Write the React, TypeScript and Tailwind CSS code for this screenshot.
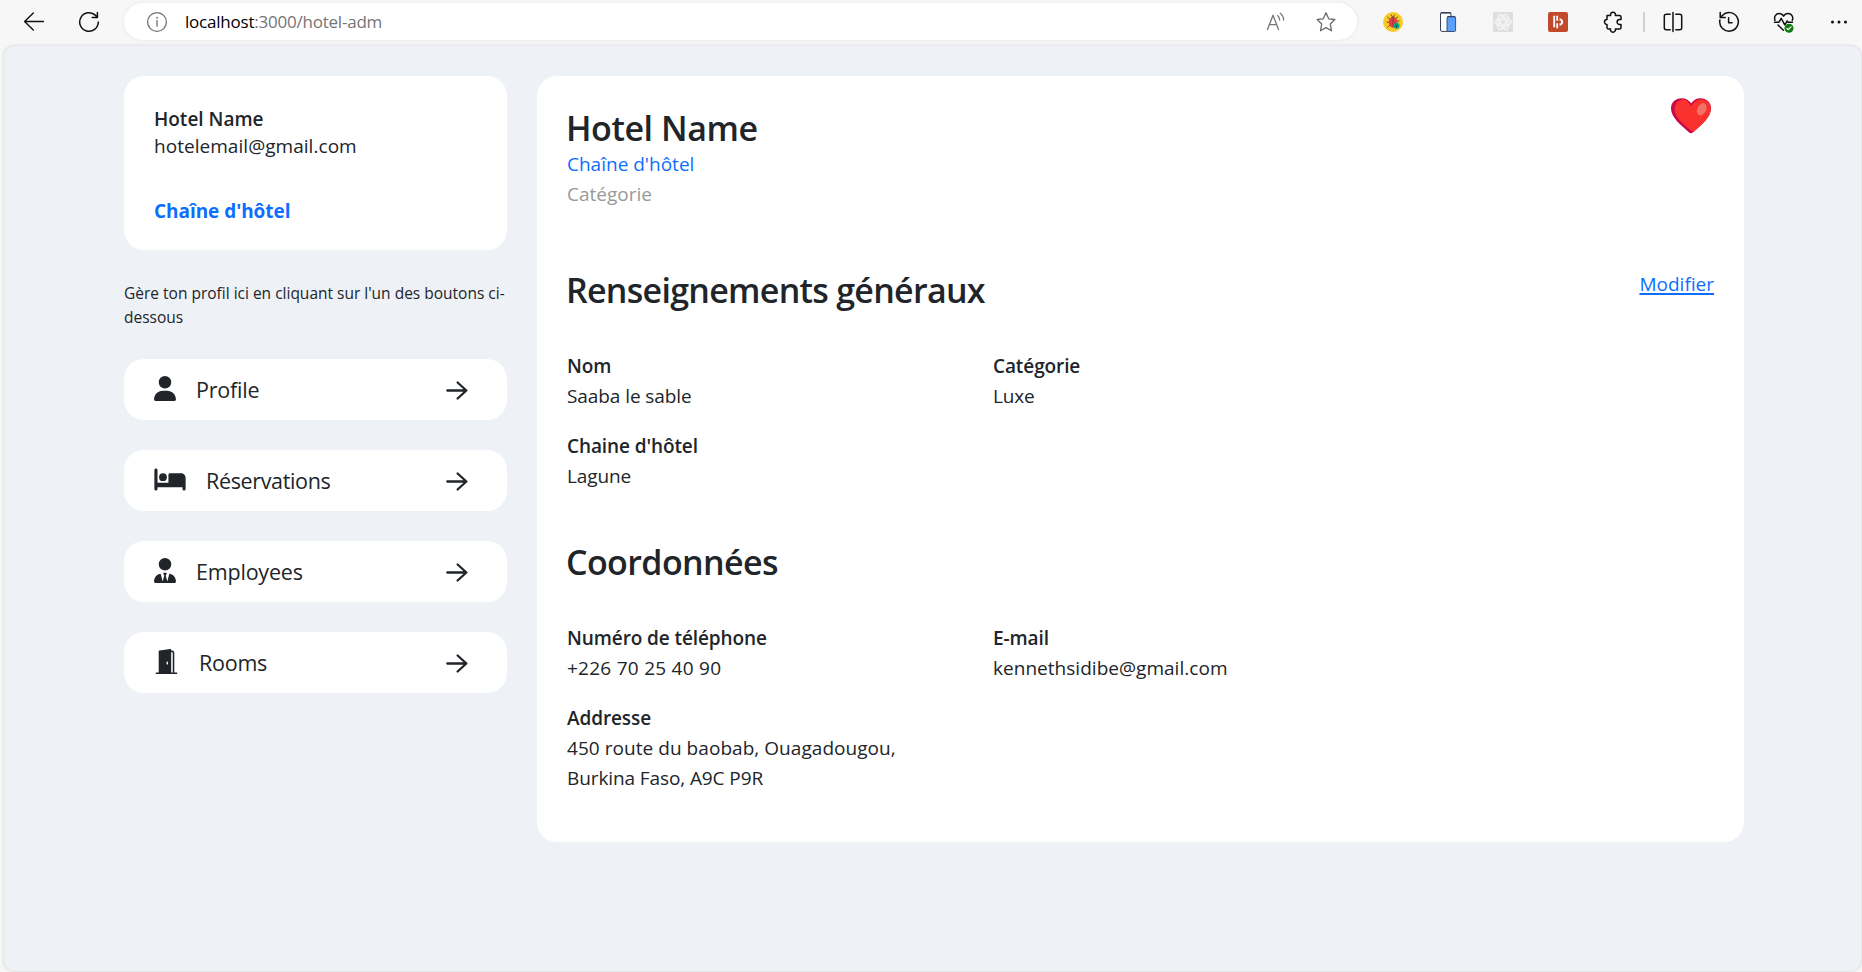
import type { ReactNode } from "react";
import { FaBed, FaUser, FaUserTie } from "react-icons/fa6";
import { BsDoorOpenFill } from "react-icons/bs";

function BackIcon() {
  return (
    <svg className="ml-[23px] h-[22px] w-[22px] shrink-0" viewBox="0 0 22 22" fill="none" stroke="#111" strokeWidth="1.4" strokeLinecap="round" strokeLinejoin="round">
      <path d="M20.5 10.5H1.8M10.3 2L1.6 10.5l8.7 8.6" />
    </svg>
  );
}

function ReloadIcon() {
  return (
    <svg className="ml-[33px] h-[22px] w-[22px] shrink-0" viewBox="0 0 22 22" fill="none" stroke="#111" strokeWidth="1.5" strokeLinecap="round" strokeLinejoin="round">
      <path d="M20.3 11A9.3 9.3 0 1 1 17.6 4.4L19.3 6.2M19.4 1.5V6.4H14.2" />
    </svg>
  );
}

function InfoIcon() {
  return (
    <svg className="h-[22px] w-[22px] shrink-0" viewBox="0 0 22 22" fill="none" stroke="#707070" strokeWidth="1.3" strokeLinecap="round">
      <circle cx="11" cy="11" r="9.4" />
      <path d="M11 9.6v5.6" />
      <circle cx="11" cy="6.8" r="0.5" fill="#707070" strokeWidth="0.8" />
    </svg>
  );
}

function ReadAloudIcon() {
  return (
    <svg className="h-[22px] w-[22px] shrink-0" viewBox="0 0 22 22" fill="none" stroke="#757575" strokeWidth="1.3" strokeLinecap="round" strokeLinejoin="round">
      <path d="M2.500 18.600L8 4.200l5.500 14.400M4.500 13.600h7" />
      <path d="M12.600 4.600c1.300 1.100 2 2.600 2 4.400M15.200 2.200c2.100 1.600 3.400 4 3.400 6.800" />
    </svg>
  );
}

function StarIcon() {
  return (
    <svg className="h-[22px] w-[22px] shrink-0" viewBox="0 0 22 22" fill="none" stroke="#6b6b6b" strokeWidth="1.3" strokeLinejoin="round">
      <path d="M11 1.800l2.700 6 6.200.7-4.600 4.500 1.200 6.800L11 16.600l-5.500 3.200 1.200-6.800L2.100 8.500l6.200-.7z" />
    </svg>
  );
}

function BugIcon() {
  return (
    <svg className="h-[22px] w-[22px] shrink-0" viewBox="0 0 22 22" fill="none">
      <circle cx="11" cy="11" r="10" fill="#fbc926" />
      <path d="M5.500 6l2.500 2M4.500 11.200h3M5.500 16.400L8 14M15.500 5.500L14 8M17.500 10H15M8.800 3.500l1 1.500M12.800 3.500l-1 1.500" stroke="#4b3a34" strokeWidth="0.8" />
      <ellipse cx="11" cy="11.300" rx="4.300" ry="5.400" fill="#dc3f45" />
      <path d="M8.800 6.600a2.400 2.400 0 0 1 4.400 0z" fill="#4b3a34" />
      <path d="M11 7v9" stroke="#8c2630" strokeWidth="0.600" />
      <circle cx="14.500" cy="14.800" r="3" fill="#0aa67c" />
      <path d="M13.300 14l1.200 1.200 1.200-1.200M14.500 15v1.800" stroke="#12453c" strokeWidth="0.900" />
    </svg>
  );
}

function DevicesIcon() {
  return (
    <svg className="h-[22px] w-[22px] shrink-0" viewBox="0 0 22 22" fill="none">
      <rect x="3.500" y="1.600" width="10.500" height="18.800" rx="1.300" fill="#fff" stroke="#39415c" strokeWidth="1" />
      <path d="M3.800 1.800h9.900" stroke="#39415c" strokeWidth="1.600" />
      <rect x="10" y="5.600" width="8.600" height="14.900" rx="1.200" fill="#5aa0ff" stroke="#39415c" strokeWidth="0.900" />
      <path d="M10.500 5.600h7.600" stroke="#39415c" strokeWidth="1.300" />
    </svg>
  );
}

function AtomIcon() {
  return (
    <svg className="h-[22px] w-[22px] shrink-0" viewBox="0 0 22 22" fill="none">
      <rect x="1" y="1" width="20" height="20" rx="1.500" fill="#dedede" />
      <g stroke="#f9f9f9" strokeWidth="0.900">
        <ellipse cx="11" cy="11" rx="8.600" ry="3.600" />
        <ellipse cx="11" cy="11" rx="8.600" ry="3.600" transform="rotate(60 11 11)" />
        <ellipse cx="11" cy="11" rx="8.600" ry="3.600" transform="rotate(120 11 11)" />
        <circle cx="11" cy="11" r="2.200" />
        <circle cx="11" cy="11" r="6.400" />
      </g>
    </svg>
  );
}

function DashIcon() {
  return (
    <svg className="h-[22px] w-[22px] shrink-0" viewBox="0 0 22 22" fill="none">
      <rect x="1" y="1" width="20" height="20" rx="2" fill="#c04a2b" />
      <path d="M7.200 4.800v11.400M10.200 4.800v5M10.200 12.200v5" stroke="#fff" strokeWidth="1.800" />
      <path d="M12.600 7.200c2.600.600 3.600 2 3.600 3.800s-1 3.200-3.600 3.800v-2.500h1.400V9.700h-1.400z" fill="#fff" />
    </svg>
  );
}

function PuzzleIcon() {
  return (
    <svg className="h-[22px] w-[22px] shrink-0" viewBox="0 0 22 22" fill="none" stroke="#111" strokeWidth="1.500" strokeLinejoin="round">
      <path d="M5 4.500H8.600A2.500 2.500 0 1 1 13.400 4.500H17.500Q19 4.500 19 6V8.400H17.600A2.500 2.500 0 1 0 17.600 13.400H19V16.400Q19 17.900 17.500 17.900H13.300A2.500 2.500 0 1 1 8.600 17.900H6.500Q5 17.900 5 16.400V13.400A2.500 2.500 0 1 1 5 8.400Z" />
    </svg>
  );
}

function SplitIcon() {
  return (
    <svg className="ml-[17px] h-[22px] w-[22px] shrink-0" viewBox="0 0 22 22" fill="none" stroke="#111" strokeWidth="1.500" strokeLinecap="round">
      <path d="M8.200 3.200H4.300Q2.300 3.200 2.300 5.200V16.800Q2.300 18.800 4.300 18.800H8.200M13.800 3.200H17.700Q19.700 3.200 19.700 5.200V16.800Q19.700 18.800 17.700 18.800H13.800M11 1.500V20.500" />
    </svg>
  );
}

function HistoryIcon() {
  return (
    <svg className="ml-[34px] h-[22px] w-[22px] shrink-0" viewBox="0 0 22 22" fill="none" stroke="#111" strokeWidth="1.500" strokeLinecap="round" strokeLinejoin="round">
      <path d="M1.900 9A9.300 9.300 0 1 0 4.300 4.400L2.200 6.500M2.200 1.600V6.600H7.200M10.600 6.800V11.700H14" />
    </svg>
  );
}

function HealthIcon() {
  return (
    <svg className="ml-[33px] h-[22px] w-[22px] shrink-0" viewBox="0 0 22 22" fill="none" stroke="#111" strokeWidth="1.500" strokeLinecap="round" strokeLinejoin="round">
      <path d="M2 9.300C.6 5.600 3 2.600 6 2.600c2.200 0 3.700 1 4.600 2.600C11.500 3.600 13 2.600 15.200 2.600c3.200 0 5.500 3 4.100 6.700M1.500 11.200H6l2.200-3.800 3.600 6.400 2.400-3.800 1 1.200H19.500M5 14l5.400 5.200" />
      <circle cx="16" cy="17.200" r="4.500" fill="#0f7b14" stroke="none" />
      <path d="M13.900 17.400l1.400 1.300 2.700-2.900" stroke="#fff" strokeWidth="1.200" />
    </svg>
  );
}

function DotsIcon() {
  return (
    <svg className="ml-[33px] h-[22px] w-[22px] shrink-0" viewBox="0 0 22 22" fill="#111">
      <circle cx="4.500" cy="11" r="1.500" />
      <circle cx="11" cy="11" r="1.500" />
      <circle cx="17.500" cy="11" r="1.500" />
    </svg>
  );
}

function ArrowIcon() {
  return (
    <svg className="h-[24px] w-[24px] shrink-0" viewBox="0 0 24 24" fill="none" stroke="#212529" strokeWidth="2.300" strokeLinecap="round" strokeLinejoin="round">
      <path d="M2.300 12.500H21.300M12.600 4.500L21.400 12.500L12.600 20.500" />
    </svg>
  );
}

function HeartIcon() {
  return (
    <svg className="mt-[-9px] mr-[3px] h-[36px] w-[40px] shrink-0" viewBox="0 0 40 36">
      <path d="M20 35.300c-.7 0-1.400-.4-2.200-1.100C10 27.500 0 19.500 0 10.600 0 4.500 4.500.3 10.400.3c4.200 0 7.600 1.900 9.800 5C22.400 2.200 25.600.3 29.600.3 35.500.3 40 4.500 40 10.600c0 8.900-10 16.900-17.800 23.600-.800.700-1.500 1.100-2.200 1.100z" fill="#c90a4a" />
      <path d="M22.300 34.100C14.500 27.900 3.600 20.300 3.600 10.900 3.600 6 7 1.700 12 1.400c3.600.2 6.400 3 8.200 7.200 1.700-3.900 5.600-7 10-7.300 5.600.1 9.700 3.900 9.700 9.300 0 8.900-9.800 16.800-17.600 23.500z" fill="#f9312f" />
      <ellipse cx="30.800" cy="11.200" rx="4.300" ry="6.500" transform="rotate(27 30.800 11.200)" fill="#f37267" />
    </svg>
  );
}

function BrowserBar() {
  return (
    <header className="flex h-[44px] shrink-0 items-center bg-[#f7f7f7]">
      <BackIcon />
      <ReloadIcon />
      <div className="mt-[-1px] ml-[24px] flex h-[37px] w-[1233px] shrink-0 items-center rounded-full bg-white pr-[20px] pl-[22px] shadow-[0_0_4px_rgba(0,0,0,0.07)]">
        <InfoIcon />
        <div className="ml-[17px] flex-1 text-[17px] leading-[24px] tracking-[-0.22px] text-[#757575]">
          <span className="text-black">localhost</span>:3000/hotel-adm
        </div>
        <ReadAloudIcon />
        <div className="w-[28px]" />
        <StarIcon />
      </div>
      <div className="ml-[25px] flex gap-[33px]">
        <BugIcon />
        <DevicesIcon />
        <AtomIcon />
        <DashIcon />
        <PuzzleIcon />
      </div>
      <div className="ml-[19px] h-[20px] w-[2px] bg-[#d0d0d0]" />
      <SplitIcon />
      <HistoryIcon />
      <HealthIcon />
      <DotsIcon />
    </header>
  );
}

function NavButton({ icon, label, tracking = "" }: { icon: ReactNode; label: string; tracking?: string }) {
  return (
    <button className="flex h-[61px] w-full items-center rounded-[20px] bg-white pr-[38px] pl-[30px] text-left">
      <span className="mt-[-2px] shrink-0">{icon}</span>
      <span className={`ml-[20px] flex-1 text-[21.5px] leading-[30px] ${tracking}`}>{label}</span>
      <ArrowIcon />
    </button>
  );
}

function Field({ label, children, tracking = "" }: { label: string; children: ReactNode; tracking?: string }) {
  return (
    <div>
      <div className="font-semibold tracking-[-0.1px]">{label}</div>
      <div className={tracking}>{children}</div>
    </div>
  );
}

function Sidebar() {
  return (
    <aside className="w-[383px] shrink-0">
      <div className="h-[174px] rounded-[20px] bg-white px-[30px] pt-[30px] text-[19px] leading-[27px]">
        <div className="font-semibold">Hotel Name</div>
        <div className="tracking-[0.04px]">hotelemail@gmail.com</div>
        <div className="mt-[38px] font-bold tracking-[-0.05px] text-[#0d6efd]">Chaîne d'hôtel</div>
      </div>
      <p className="mt-[31px] text-[15.5px] leading-[24px] whitespace-nowrap">
        Gère ton profil ici en cliquant sur l'un des boutons ci-
        <br />
        dessous
      </p>
      <nav className="mt-[30px] flex flex-col gap-[30px]">
        <NavButton icon={<FaUser className="h-[25px] w-[22px]" />} label="Profile" tracking="tracking-[-0.2px]" />
        <NavButton icon={<FaBed className="h-[25px] w-[32px]" />} label="Réservations" tracking="tracking-[-0.35px]" />
        <NavButton icon={<FaUserTie className="h-[25px] w-[22px]" />} label="Employees" tracking="tracking-[-0.2px]" />
        <NavButton icon={<BsDoorOpenFill className="h-[25px] w-[25px]" />} label="Rooms" tracking="tracking-[-0.25px]" />
      </nav>
    </aside>
  );
}

function Details() {
  return (
    <main className="h-[766px] w-[1207px] shrink-0 rounded-[20px] bg-white px-[30px] pt-[31px] text-[19px] leading-[30px]">
      <div className="flex justify-between">
        <div>
          <h1 className="ml-[-1px] text-[34px] leading-[42px] font-semibold tracking-[-0.45px]">Hotel Name</h1>
          <div className="text-[#0d6efd]">Chaîne d'hôtel</div>
          <div className="text-[#999]">Catégorie</div>
        </div>
        <HeartIcon />
      </div>
      <div className="mt-[60px] flex justify-between">
        <h2 className="ml-[-1px] text-[34px] leading-[42px] font-semibold tracking-[-0.72px]">Renseignements généraux</h2>
        <a className="h-[30px] text-[#0d6efd] underline decoration-[2px] underline-offset-[2px]">Modifier</a>
      </div>
      <div className="mt-[40px] grid grid-cols-[426px_426px] gap-y-[20px]">
        <Field label="Nom" tracking="tracking-[-0.08px]">Saaba le sable</Field>
        <Field label="Catégorie" tracking="tracking-[-0.2px]">Luxe</Field>
        <Field label="Chaine d'hôtel" tracking="tracking-[-0.1px]">Lagune</Field>
      </div>
      <h2 className="mt-[50px] ml-[-1px] text-[34px] leading-[42px] font-semibold tracking-[-0.6px]">Coordonnées</h2>
      <div className="mt-[40px] grid grid-cols-[426px_426px] gap-y-[20px]">
        <Field label="Numéro de téléphone" tracking="tracking-[0.26px]">+226 70 25 40 90</Field>
        <Field label="E-mail" tracking="tracking-[0.03px]">kennethsidibe@gmail.com</Field>
        <Field label="Addresse">
          <span className="tracking-[0.05px]">450 route du baobab, Ouagadougou,</span>
          <br />
          <span className="tracking-[-0.1px]">Burkina Faso, A9C P9R</span>
        </Field>
      </div>
    </main>
  );
}

export default function App() {
  return (
    <div className="flex h-[972px] w-[1862px] flex-col overflow-hidden bg-[#f7f7f7] font-['Open_Sans','Noto_Sans',sans-serif] text-[#212529]">
      <BrowserBar />
      <div className="mt-px ml-[3px] flex h-[927px] gap-[30px] rounded-[12px] border border-[#e6e7ea] bg-[#eef1f6] pt-[30px] pl-[120px] shadow-[0_0_3px_rgba(0,0,0,0.1)]">
        <Sidebar />
        <Details />
      </div>
    </div>
  );
}
